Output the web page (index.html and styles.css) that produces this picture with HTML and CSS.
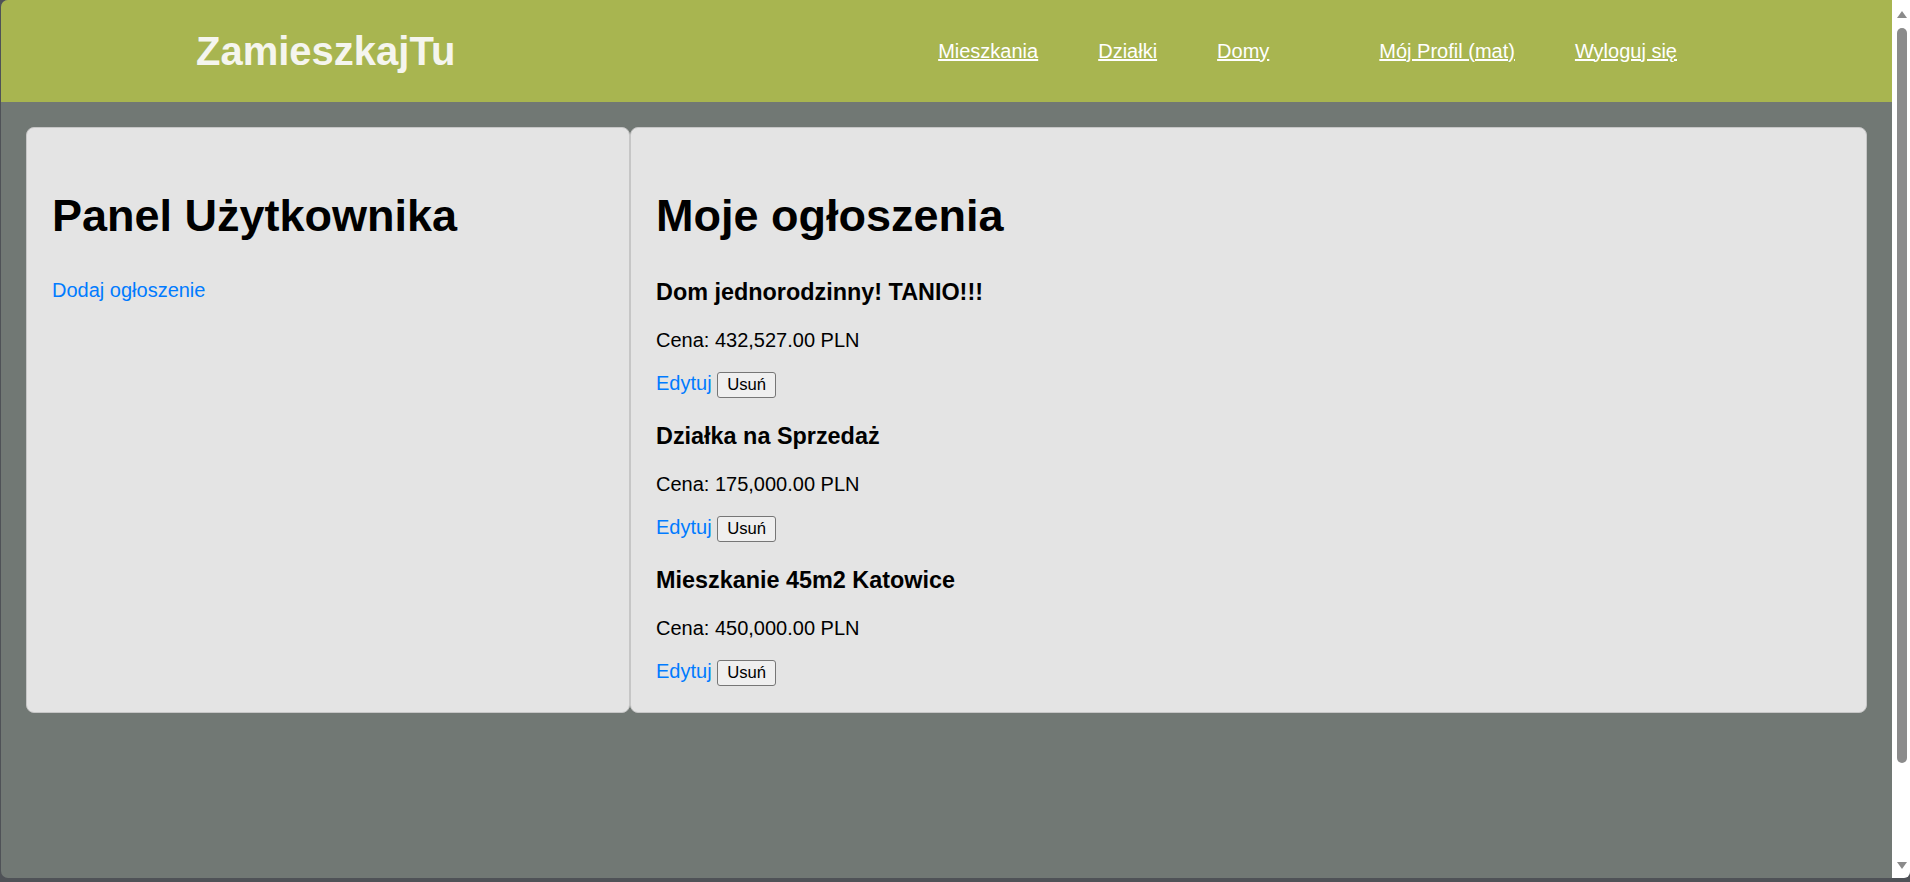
FILE: index.html
```html
<!DOCTYPE html>
<html lang="pl">
<head>
<meta charset="utf-8">
<title>ZamieszkajTu - Panel Użytkownika</title>
<link rel="stylesheet" href="styles.css">
</head>
<body>
<div class="window">
  <div class="viewport">
    <div class="page">
      <header class="topbar">
        <div class="logo">ZamieszkajTu</div>
        <nav class="nav">
          <ul class="nav-group">
            <li><a href="#">Mieszkania</a></li>
            <li><a href="#">Działki</a></li>
            <li><a href="#">Domy</a></li>
          </ul>
          <ul class="nav-group">
            <li><a href="#">Mój Profil (mat)</a></li>
            <li><a href="#">Wyloguj się</a></li>
          </ul>
        </nav>
      </header>
      <main class="content">
        <section class="card card-side">
          <h1>Panel Użytkownika</h1>
          <p><a class="link" href="#">Dodaj ogłoszenie</a></p>
        </section>
        <section class="card card-main">
          <h1>Moje ogłoszenia</h1>
          <div class="listing">
            <h3>Dom jednorodzinny! TANIO!!!</h3>
            <p>Cena: 432,527.00 PLN</p>
            <div class="actions"><a class="link" href="#">Edytuj</a> <button class="btn" type="button">Usuń</button></div>
          </div>
          <div class="listing">
            <h3>Działka na Sprzedaż</h3>
            <p>Cena: 175,000.00 PLN</p>
            <div class="actions"><a class="link" href="#">Edytuj</a> <button class="btn" type="button">Usuń</button></div>
          </div>
          <div class="listing">
            <h3>Mieszkanie 45m2 Katowice</h3>
            <p>Cena: 450,000.00 PLN</p>
            <div class="actions"><a class="link" href="#">Edytuj</a> <button class="btn" type="button">Usuń</button></div>
          </div>
        </section>
      </main>
    </div>
    <div class="scrollbar">
      <div class="arrow arrow-up"></div>
      <div class="thumb"></div>
      <div class="arrow arrow-down"></div>
    </div>
  </div>
</div>
</body>
</html>
```

FILE: styles.css
```css
html, body {
  margin: 0;
  padding: 0;
  height: 100%;
  overflow: hidden;
}

body {
  font-family: "Liberation Sans", Arial, sans-serif;
  font-size: 20px;
  color: #000;
  background: #4f5257;
}

.window {
  height: 882px;
  box-sizing: border-box;
  padding: 0 0 4px 1px;
  background: #4f5257;
}

.viewport {
  display: flex;
  height: 100%;
}

.page {
  flex: 1;
  background: #717874;
  border-radius: 7px 0 0 7px;
  overflow: hidden;
  min-width: 0;
}

.topbar {
  height: 102px;
  background: #a8b550;
  display: flex;
  align-items: center;
  padding: 0 215px 0 195px;
}

.logo {
  font-size: 40px;
  font-weight: bold;
  color: #f5f5ee;
}

.nav {
  margin-left: auto;
  display: flex;
  gap: 110px;
}

.nav-group {
  list-style: none;
  margin: 0;
  padding: 0;
  display: flex;
  gap: 60px;
}

.nav-group a {
  color: #fff;
  text-decoration: underline;
  font-size: 20px;
}

.content {
  display: flex;
  align-items: stretch;
  margin: 25px 25px 0 25px;
}

.card {
  background: #e4e4e4;
  border: 1px solid #c6c6c6;
  border-radius: 8px;
  padding: 25px;
}

.card-side {
  flex: 0 0 552px;
}

.card-main {
  flex: 1;
}

h1 {
  font-size: 45px;
  font-weight: bold;
  margin: 37px 0;
}

h3 {
  font-size: 23.4px;
  font-weight: bold;
  margin: 23.4px 0;
}

p {
  margin: 20px 0;
}

.actions {
  padding-bottom: 1px;
}

.link {
  color: #007bff;
  text-decoration: none;
}

.btn {
  font-family: "Liberation Sans", Arial, sans-serif;
  font-size: 16.67px;
  color: #000;
  background: #efefef;
  border: 1px solid #767676;
  border-radius: 3px;
  padding: 2px 9px;
  height: 26px;
  vertical-align: baseline;
}

.scrollbar {
  width: 18px;
  background: #fff;
  display: flex;
  flex-direction: column;
  align-items: center;
  border-bottom-right-radius: 6px;
}

.arrow {
  width: 0;
  height: 0;
  border-left: 5px solid transparent;
  border-right: 5px solid transparent;
  margin-left: 2px;
}

.arrow-up {
  margin-top: 11px;
  border-bottom: 7px solid #8b8b8b;
}

.thumb {
  margin-top: 10px;
  margin-left: 2px;
  width: 10px;
  height: 735px;
  background: #8b8b8b;
  border-radius: 5px;
}

.arrow-down {
  margin-top: auto;
  margin-bottom: 9px;
  border-top: 7px solid #8b8b8b;
}
```
